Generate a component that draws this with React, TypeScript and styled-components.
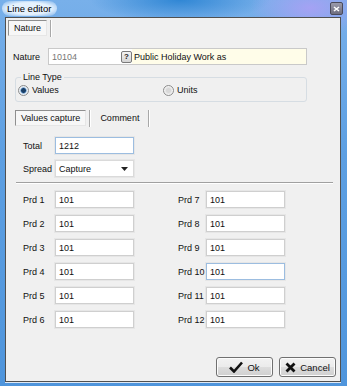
import React from "react";
import styled, { createGlobalStyle } from "styled-components";

const GlobalStyle = createGlobalStyle`
  html, body {
    margin: 0;
    padding: 0;
    background: #5b9de0;
  }
  * {
    box-sizing: border-box;
  }
`;

const leftPeriods = [1, 2, 3, 4, 5, 6];
const rightPeriods = [7, 8, 9, 10, 11, 12];

const App: React.FC = () => {
  return (
    <>
      <GlobalStyle />
      <Frame>
        <TitleBar>
          <Title>Line editor</Title>
          <CloseButton>
            <svg width="7" height="6" viewBox="0 0 7 6">
              <path d="M1 1 L6 5 M6 1 L1 5" stroke="#fff" strokeWidth="1.6" />
            </svg>
          </CloseButton>
        </TitleBar>
        <Client>
          <TabStrip $indent={2}>
            <Tab $active>Nature</Tab>
            <TabSep />
          </TabStrip>
          <Body>
            <NatureRow>
              <Label $width={35}>Nature</Label>
              <LookupField>
                <CodeText>10104</CodeText>
                <HelpButton>?</HelpButton>
                <Description>Public Holiday Work as</Description>
              </LookupField>
            </NatureRow>

            <Group>
              <Legend>Line Type</Legend>
              <RadioRow>
                <RadioItem $width={145}>
                  <Radio $checked />
                  Values
                </RadioItem>
                <RadioItem>
                  <Radio />
                  Units
                </RadioItem>
              </RadioRow>
            </Group>

            <TabStrip $indent={2} $top={8}>
              <Tab $active>Values capture</Tab>
              <TabSep />
              <Tab>Comment</Tab>
              <TabSep />
            </TabStrip>

            <Fields>
              <FieldRow>
                <Label $width={32}>Total</Label>
                <TextBox $focus>1212</TextBox>
              </FieldRow>
              <FieldRow>
                <Label $width={32}>Spread</Label>
                <SelectBox>
                  Capture
                  <svg width="7" height="4" viewBox="0 0 7 4">
                    <path d="M0 0 H7 L3.5 4 Z" fill="#222" />
                  </svg>
                </SelectBox>
              </FieldRow>
            </Fields>

            <Separator />

            <PeriodGrid>
              <PeriodColumn>
                {leftPeriods.map((p) => (
                  <FieldRow key={p}>
                    <Label $width={32}>Prd {p}</Label>
                    <TextBox>101</TextBox>
                  </FieldRow>
                ))}
              </PeriodColumn>
              <PeriodColumn>
                {rightPeriods.map((p) => (
                  <FieldRow key={p}>
                    <Label $width={28}>Prd {p}</Label>
                    <TextBox $focus={p === 10}>101</TextBox>
                  </FieldRow>
                ))}
              </PeriodColumn>
            </PeriodGrid>
          </Body>

          <ButtonBar>
            <DialogButton>
              <svg width="14" height="12" viewBox="0 0 14 12">
                <path d="M1 6.5 L5 10.5 L13 1.5" fill="none" stroke="#111" strokeWidth="2.6" />
              </svg>
              Ok
            </DialogButton>
            <DialogButton>
              <svg width="11" height="11" viewBox="0 0 11 11">
                <path d="M1.5 1.5 L9.5 9.5 M9.5 1.5 L1.5 9.5" stroke="#111" strokeWidth="2.8" />
              </svg>
              Cancel
            </DialogButton>
          </ButtonBar>
        </Client>
      </Frame>
    </>
  );
};

export default App;

const Frame = styled.div`
  width: 347px;
  height: 386px;
  display: flex;
  flex-direction: column;
  background:
    radial-gradient(ellipse 60px 30px at 310px 8px, rgba(170, 160, 245, 0.9), rgba(170, 160, 245, 0) 100%),
    radial-gradient(ellipse 90px 22px at 180px 0px, rgba(40, 130, 210, 0.9), rgba(40, 130, 210, 0) 100%),
    linear-gradient(180deg, #78b0ea 0%, #5d9fe2 40%, #4f95dc 100%);
  font-family: "Liberation Sans", Arial, sans-serif;
  font-size: 9px;
  color: #111;
`;

const TitleBar = styled.div`
  height: 17px;
  display: flex;
  align-items: center;
  justify-content: space-between;
  padding: 0 4px 0 2px;
`;

const Title = styled.div`
  padding: 2px 6px 2px 5px;
  font-size: 9.5px;
  color: #000;
  border-radius: 9px;
  background: radial-gradient(ellipse at center, rgba(235, 245, 255, 0.95) 55%, rgba(235, 245, 255, 0) 100%);
`;

const CloseButton = styled.div`
  width: 13px;
  height: 13px;
  display: flex;
  align-items: center;
  justify-content: center;
  background: linear-gradient(180deg, #9a9aaa, #6e6e80);
  border: 1px solid #4a4a5a;
  border-radius: 2px;
`;

const Client = styled.div`
  flex: 1;
  margin: 0 6px 4px 5px;
  display: flex;
  flex-direction: column;
  background: #f0f0f0;
  border: 1px solid #505050;
  box-shadow: 0 1px 0 #dfe9f5;
`;

const TabStrip = styled.div<{ $indent: number; $top?: number }>`
  display: flex;
  align-items: stretch;
  height: 17px;
  margin: ${({ $top }) => $top ?? 2}px 0 0 ${({ $indent }) => $indent}px;
`;

const Tab = styled.div<{ $active?: boolean }>`
  display: flex;
  align-items: center;
  padding: 0 5px;
  height: 16px;
  margin-right: 3px;
  color: #111;
  border: 1px solid;
  border-color: ${({ $active }) =>
    $active ? "#8f8f8f #e6e6e6 #e6e6e6 #8f8f8f" : "transparent"};
  background: ${({ $active }) => ($active ? "#f7f7f7" : "transparent")};
`;

const TabSep = styled.div`
  width: 2px;
  height: 17px;
  margin-right: 3px;
  border-left: 1px solid #a8a8a8;
  border-right: 1px solid #ffffff;
`;

const Body = styled.div`
  padding-left: 7px;
  display: flex;
  flex-direction: column;
`;

const NatureRow = styled.div`
  display: flex;
  align-items: center;
  margin-top: 11px;
  height: 17px;
`;

const Label = styled.span<{ $width: number }>`
  width: ${({ $width }) => $width}px;
  flex-shrink: 0;
  white-space: nowrap;
`;

const LookupField = styled.div`
  width: 259px;
  height: 17px;
  display: flex;
  align-items: center;
  border: 1px solid #c9c9c9;
  background: #fff;
`;

const CodeText = styled.span`
  width: 72px;
  padding-left: 3px;
  color: #777;
`;

const HelpButton = styled.span`
  width: 11px;
  height: 12px;
  display: flex;
  align-items: center;
  justify-content: center;
  font-weight: bold;
  font-size: 8px;
  color: #222;
  background: linear-gradient(180deg, #f4f4f4, #d4d4d4);
  border: 1px solid #7a7a7a;
  border-radius: 2px;
`;

const Description = styled.span`
  flex: 1;
  align-self: stretch;
  display: flex;
  align-items: center;
  padding-left: 2px;
  background: #fffde9;
`;

const Group = styled.fieldset`
  margin: 7px 0 0 2px;
  width: 292px;
  height: 30px;
  padding: 0 0 0 2px;
  border: 1px solid #d6dde3;
  border-radius: 3px;
  min-width: 0;
`;

const Legend = styled.legend`
  padding: 0 2px;
  margin-left: 3px;
  line-height: 10px;
`;

const RadioRow = styled.div`
  display: flex;
  align-items: center;
  height: 16px;
`;

const RadioItem = styled.label<{ $width?: number }>`
  display: flex;
  align-items: center;
  gap: 3px;
  width: ${({ $width }) => ($width ? `${$width}px` : "auto")};
`;

const Radio = styled.span<{ $checked?: boolean }>`
  width: 11px;
  height: 11px;
  border-radius: 50%;
  border: 1px solid #8c8c8c;
  background: ${({ $checked }) =>
    $checked
      ? "radial-gradient(circle, #1c3f66 0 2px, #4d86c0 2.5px, #e8eef4 3.5px)"
      : "radial-gradient(circle, #d8d8d8 0 2px, #f2f2f2 4px)"};
`;

const Fields = styled.div`
  display: flex;
  flex-direction: column;
  gap: 6px;
  margin-top: 10px;
  padding-left: 10px;
`;

const FieldRow = styled.div`
  display: flex;
  align-items: center;
  height: 17px;
`;

const TextBox = styled.div<{ $focus?: boolean }>`
  width: 79px;
  height: 17px;
  display: flex;
  align-items: center;
  padding-left: 3px;
  background: #fff;
  border: 1px solid ${({ $focus }) => ($focus ? "#9cbde0" : "#cfcfcf")};
  box-shadow: 0 0 0 1px #e6e6e6;
`;

const SelectBox = styled(TextBox)`
  justify-content: space-between;
  padding-right: 5px;
  border-color: #dadada;
`;

const Separator = styled.div`
  margin: 5px 0 0 3px;
  width: 317px;
  border-top: 1px solid #a0a0a0;
  border-bottom: 1px solid #ffffff;
`;

const PeriodGrid = styled.div`
  display: flex;
  gap: 44px;
  margin-top: 7px;
  padding-left: 10px;
`;

const PeriodColumn = styled.div`
  display: flex;
  flex-direction: column;
  gap: 7px;
`;

const ButtonBar = styled.div`
  margin-top: auto;
  display: flex;
  justify-content: flex-end;
  gap: 6px;
  padding: 0 4px 4px 0;
`;

const DialogButton = styled.button`
  width: 57px;
  height: 20px;
  display: flex;
  align-items: center;
  justify-content: center;
  gap: 4px;
  padding: 0;
  font-family: "Liberation Sans", Arial, sans-serif;
  font-size: 9.5px;
  color: #111;
  border: 1px solid #707070;
  border-radius: 3px;
  background: linear-gradient(180deg, #f2f2f2 0%, #ebebeb 50%, #dddddd 51%, #cfcfcf 100%);
  box-shadow: inset 0 0 0 1px #fcfcfc;
`;
